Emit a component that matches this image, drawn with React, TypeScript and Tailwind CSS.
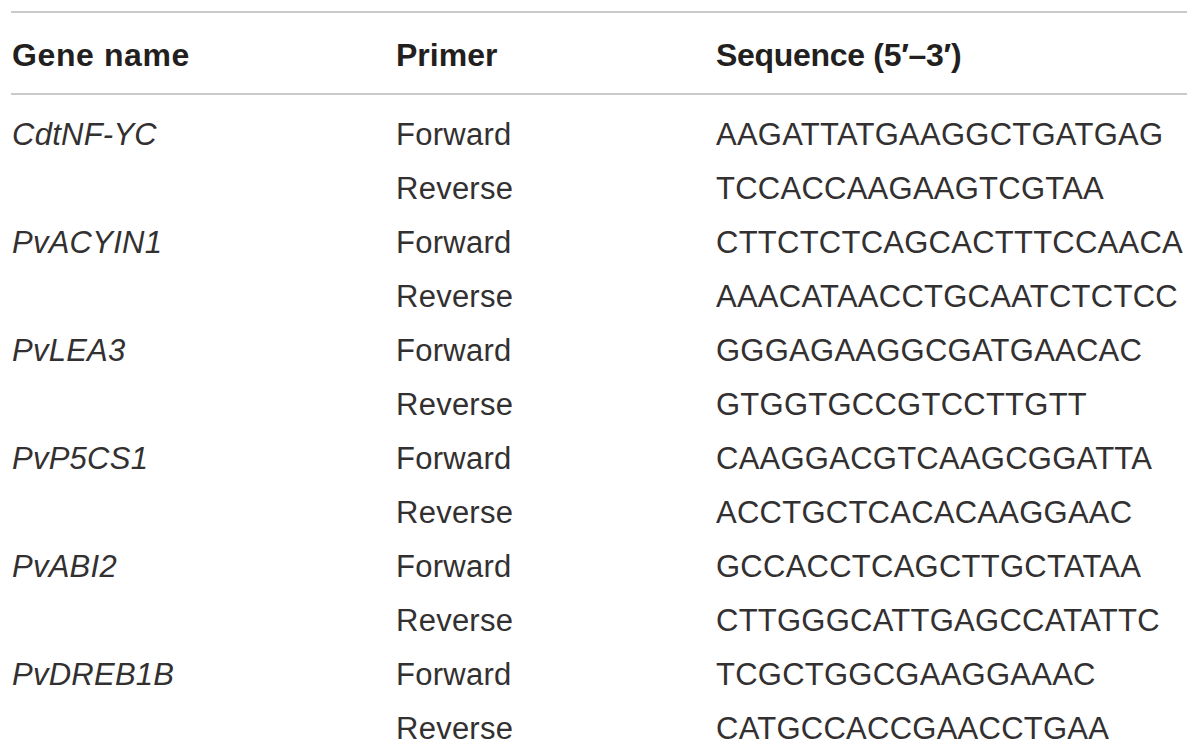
const rows = [
  { gene: 'CdtNF-YC', fwd: 'AAGATTATGAAGGCTGATGAG', rev: 'TCCACCAAGAAGTCGTAA' },
  { gene: 'PvACYIN1', fwd: 'CTTCTCTCAGCACTTTCCAACA', rev: 'AAACATAACCTGCAATCTCTCC' },
  { gene: 'PvLEA3', fwd: 'GGGAGAAGGCGATGAACAC', rev: 'GTGGTGCCGTCCTTGTT' },
  { gene: 'PvP5CS1', fwd: 'CAAGGACGTCAAGCGGATTA', rev: 'ACCTGCTCACACAAGGAAC' },
  { gene: 'PvABI2', fwd: 'GCCACCTCAGCTTGCTATAA', rev: 'CTTGGGCATTGAGCCATATTC' },
  { gene: 'PvDREB1B', fwd: 'TCGCTGGCGAAGGAAAC', rev: 'CATGCCACCGAACCTGAA' },
];

const App = () => {
  return (
    <div className="min-h-screen w-full bg-white pt-[11px] pl-[11px] font-['Liberation_Sans',Arial,sans-serif] text-[#231f20]">
      <div className="w-[1176px]">
        <div className="grid grid-cols-[384px_320px_1fr] h-[84px] items-center border-y-2 border-[#cacaca] pl-[1px] text-[32px] font-bold leading-none pt-[4px]">
          <div className="tracking-[0.6px]">Gene name</div>
          <div>Primer</div>
          <div className="tracking-[-0.3px]">Sequence (5′–3′)</div>
        </div>
        <div className="pt-[13px] pl-[1px] text-[31px] leading-[54px] tracking-[0.25px] text-[#333031]">
          {rows.map((r) => (
            <div key={r.gene}>
              <div className="grid grid-cols-[384px_320px_1fr] h-[54px] items-center">
                <div className="italic">{r.gene}</div>
                <div>Forward</div>
                <div>{r.fwd}</div>
              </div>
              <div className="grid grid-cols-[384px_320px_1fr] h-[54px] items-center">
                <div></div>
                <div>Reverse</div>
                <div>{r.rev}</div>
              </div>
            </div>
          ))}
        </div>
      </div>
    </div>
  );
};

export default App;
